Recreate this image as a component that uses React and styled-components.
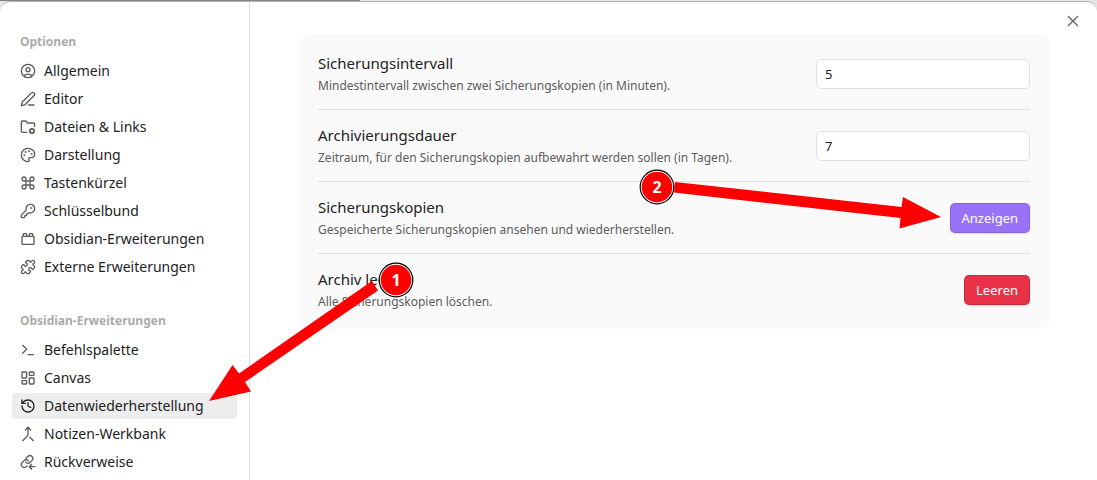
import { useState } from 'react';
import styled, { createGlobalStyle } from 'styled-components';
import {
  CircleUser,
  PenLine,
  FolderCog,
  Palette,
  Command,
  KeyRound,
  ToyBrick,
  Puzzle,
  Terminal,
  LayoutDashboard,
  History,
  Merge,
  X,
} from 'lucide-react';

const GlobalStyle = createGlobalStyle`
  * {
    box-sizing: border-box;
  }
  body {
    margin: 0;
    background: #e6e6e6;
    color: #222222;
    font-family: 'Noto Sans', sans-serif;
    font-size: 14px;
  }
`;

const Backdrop = styled.div`
  padding-top: 1px;
  background: linear-gradient(to right, #828282 360px, #e6e6e6 360px);
  background-size: 100% 1px;
  background-repeat: no-repeat;
`;

const Modal = styled.div`
  position: relative;
  display: flex;
  min-height: calc(100vh - 1px);
  overflow: hidden;
  background: #ffffff;
  border-top: 1px solid #b4b4b4;
  border-radius: 10px 10px 0 0;
`;

const Sidebar = styled.nav`
  flex: 0 0 250px;
  padding: 30px 12px 0;
  border-right: 1px solid #e0e0e0;
`;

const NavGroup = styled.section`
  & + & {
    margin-top: 31px;
  }
`;

const NavTitle = styled.h2`
  margin: 0 0 6px;
  padding: 0 8px;
  color: #ababab;
  font-size: 12px;
  font-weight: 700;
  line-height: 20px;
`;

const NavList = styled.ul`
  display: flex;
  flex-direction: column;
  gap: 2px;
  margin: 0;
  padding: 0;
  list-style: none;
`;

const NavLink = styled.a`
  display: flex;
  align-items: center;
  gap: 8px;
  height: 26px;
  padding: 0 8px;
  border-radius: 4px;
  background: ${({ $active }) => ($active ? '#ededed' : 'transparent')};
  color: #222222;
  line-height: 18px;
  text-decoration: none;
  white-space: nowrap;

  svg {
    flex: none;
    color: ${({ $active }) => ($active ? '#222222' : '#5c5c5c')};
  }
`;

const Content = styled.main`
  flex: 1;
  min-width: 0;
  padding: 32px 47px 32px 48px;
`;

const Card = styled.div`
  padding: 16px 20px;
  border-radius: 12px;
  background: #fafafa;
`;

const Setting = styled.div`
  display: flex;
  align-items: center;
  justify-content: space-between;
  gap: 16px;
  height: 72px;
  padding: 12px 0;

  & + & {
    border-top: 1px solid #e0e0e0;
  }
  &:first-child {
    height: 59px;
    padding-top: 0;
  }
  &:last-child {
    height: 60px;
    padding-bottom: 0;
  }
`;

const SettingInfo = styled.div`
  padding-bottom: 2px;
`;

const SettingName = styled.label`
  display: block;
  font-size: 15px;
  line-height: 24px;
`;

const SettingText = styled.p`
  margin: 2px 0 0;
  color: #5c5c5c;
  font-size: 12px;
  line-height: 18px;
`;

const NumberField = styled.input`
  width: 214px;
  height: 30px;
  padding: 0 8px;
  border: 1px solid #e0e0e0;
  border-radius: 5px;
  background: #ffffff;
  color: #222222;
  font-family: inherit;
  font-size: 13px;
`;

const Button = styled.button`
  height: 30px;
  padding: 0 11px;
  border: 1px solid rgba(0, 0, 0, 0.12);
  border-radius: 5px;
  background: ${({ $danger }) => ($danger ? '#e93147' : '#9873f7')};
  box-shadow: 0 1px 2px rgba(0, 0, 0, 0.12);
  color: #ffffff;
  font-family: inherit;
  font-size: 13px;
`;

const CloseButton = styled.button`
  position: absolute;
  top: 10px;
  right: 15px;
  display: flex;
  padding: 0;
  border: 0;
  background: none;
  color: #6b6b6b;
`;

const Annotations = styled.svg`
  position: absolute;
  top: -2px;
  left: 0;
  pointer-events: none;
`;

const Backlink = ({ size, strokeWidth }) => (
  <svg
    width={size}
    height={size}
    viewBox="0 0 24 24"
    fill="none"
    stroke="currentColor"
    strokeWidth={strokeWidth}
    strokeLinecap="round"
    strokeLinejoin="round"
  >
    <path d="M8.5 12.2a4.4 4.4 0 0 0 6.600.5l3.100-3.100a4.400 4.400 0 0 0-6.200-6.200l-3 3" />
    <path d="M12.600 10.400a4.400 4.400 0 0 0-6.600-.5L3 13a4.400 4.400 0 0 0 6.200 6.200l1.300-1.300" />
    <path d="M22.500 19H14.500" />
    <path d="m17.500 15.500-3.500 3.500 3.500 3.500" />
  </svg>
);

const groups = [
  {
    title: 'Optionen',
    items: [
      { label: 'Allgemein', icon: CircleUser },
      { label: 'Editor', icon: PenLine },
      { label: 'Dateien & Links', icon: FolderCog },
      { label: 'Darstellung', icon: Palette },
      { label: 'Tastenkürzel', icon: Command },
      { label: 'Schlüsselbund', icon: KeyRound },
      { label: 'Obsidian-Erweiterungen', icon: ToyBrick },
      { label: 'Externe Erweiterungen', icon: Puzzle },
    ],
  },
  {
    title: 'Obsidian-Erweiterungen',
    items: [
      { label: 'Befehlspalette', icon: Terminal },
      { label: 'Canvas', icon: LayoutDashboard },
      { label: 'Datenwiederherstellung', icon: History },
      { label: 'Notizen-Werkbank', icon: Merge },
      { label: 'Rückverweise', icon: Backlink },
    ],
  },
];

const App = () => {
  const [active, setActive] = useState('Datenwiederherstellung');
  const [minutes, setMinutes] = useState('5');
  const [days, setDays] = useState('7');

  return (
    <Backdrop>
      <GlobalStyle />
      <Modal>
        <Sidebar>
          {groups.map((group) => (
            <NavGroup key={group.title}>
              <NavTitle>{group.title}</NavTitle>
              <NavList>
                {group.items.map(({ label, icon: Icon }) => (
                  <li key={label}>
                    <NavLink
                      href="#"
                      $active={label === active}
                      onClick={() => setActive(label)}
                    >
                      <Icon size={16} strokeWidth={2} />
                      {label}
                    </NavLink>
                  </li>
                ))}
              </NavList>
            </NavGroup>
          ))}
        </Sidebar>
        <Content>
          <Card>
            <Setting>
              <SettingInfo>
                <SettingName htmlFor="minutes">Sicherungsintervall</SettingName>
                <SettingText>
                  Mindestintervall zwischen zwei Sicherungskopien (in Minuten).
                </SettingText>
              </SettingInfo>
              <NumberField
                id="minutes"
                value={minutes}
                onChange={(e) => setMinutes(e.target.value)}
              />
            </Setting>
            <Setting>
              <SettingInfo>
                <SettingName htmlFor="days">Archivierungsdauer</SettingName>
                <SettingText>
                  Zeitraum, für den Sicherungskopien aufbewahrt werden sollen (in
                  Tagen).
                </SettingText>
              </SettingInfo>
              <NumberField
                id="days"
                value={days}
                onChange={(e) => setDays(e.target.value)}
              />
            </Setting>
            <Setting>
              <SettingInfo>
                <SettingName id="show-name" as="div">
                  Sicherungskopien
                </SettingName>
                <SettingText>
                  Gespeicherte Sicherungskopien ansehen und wiederherstellen.
                </SettingText>
              </SettingInfo>
              <Button aria-describedby="show-name">Anzeigen</Button>
            </Setting>
            <Setting>
              <SettingInfo>
                <SettingName id="clear-name" as="div">
                  Archiv leeren
                </SettingName>
                <SettingText>Alle Sicherungskopien löschen.</SettingText>
              </SettingInfo>
              <Button aria-describedby="clear-name" $danger>
                Leeren
              </Button>
            </Setting>
          </Card>
        </Content>
        <CloseButton aria-label="Schließen">
          <X size={18} strokeWidth={2} />
        </CloseButton>
        <Annotations width="1097" height="480" viewBox="0 0 1097 480">
          <g fill="#ff0000">
            <path d="M372 281 239 373.500 232.500 365 209 401 251 391.500 245 382 378 290.500Z" />
            <path d="M675 182 901.500 207 903 197 941 217 899.500 228.500 900.500 218 674 192.500Z" />
          </g>
          <g fill="#ffffff" stroke="#000000" strokeWidth="1.200">
            <circle cx="396" cy="280" r="16.800" />
            <circle cx="657" cy="187" r="16.800" />
          </g>
          <g fill="#ff0000">
            <circle cx="396" cy="280" r="15.300" />
            <circle cx="657" cy="187" r="15.300" />
          </g>
          <g fill="#ffffff" fontSize="16" fontWeight="700" textAnchor="middle">
            <text x="396" y="286">1</text>
            <text x="657" y="193">2</text>
          </g>
        </Annotations>
      </Modal>
    </Backdrop>
  );
};

export default App;
